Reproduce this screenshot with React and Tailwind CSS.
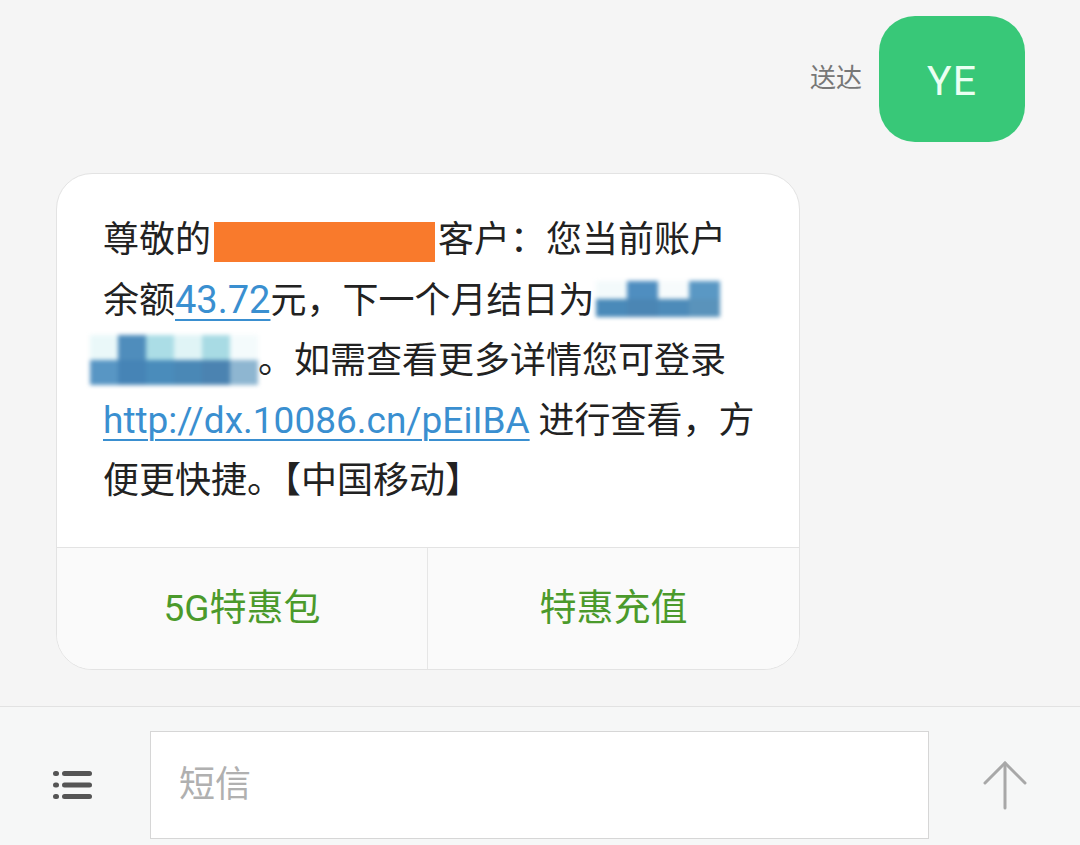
import React from 'react';

const FONT = { fontFamily: 'Roboto, "Noto Sans CJK SC", sans-serif' };

// 打码区块：像素格 + 模糊
const Mosaic = ({ top, bottom, cell, h, className }) => (
  <span className={`inline-flex flex-col align-middle blur-[2px] ${className || ''}`}>
    <span className="flex">
      {top.map((c, i) => (
        <span key={i} style={{ width: cell, height: h / 2, background: c }} />
      ))}
    </span>
    <span className="flex">
      {bottom.map((c, i) => (
        <span key={i} style={{ width: cell, height: h / 2, background: c }} />
      ))}
    </span>
  </span>
);

const MenuIcon = () => (
  <svg width="40" height="30" viewBox="0 0 40 30" fill="#555">
    <rect x="0" y="1" width="6" height="5" rx="2.5" />
    <rect x="9" y="1" width="30" height="5" rx="2.5" />
    <rect x="0" y="12.5" width="6" height="5" rx="2.5" />
    <rect x="9" y="12.5" width="30" height="5" rx="2.5" />
    <rect x="0" y="24" width="6" height="5" rx="2.5" />
    <rect x="9" y="24" width="30" height="5" rx="2.5" />
  </svg>
);

const UpArrow = () => (
  <svg width="46" height="50" viewBox="0 0 46 50" fill="none" stroke="#a8a8a8" strokeWidth="3" strokeLinecap="round">
    <line x1="23" y1="3" x2="23" y2="48" />
    <polyline points="3,23 23,3 43,23" />
  </svg>
);

export default function App() {
  return (
    <div className="min-h-[845px] h-[845px] flex flex-col bg-[#f5f5f5] overflow-hidden" style={FONT}>
      {/* 聊天区 */}
      <div className="flex-1 flex flex-col pt-4">
        <div className="flex justify-end items-center pr-[55px] gap-[17px]">
          <span className="text-[26px] text-[#777] mt-[-2px]">送达</span>
          <div className="w-[146px] h-[126px] rounded-[36px] bg-[#38c878] flex items-center justify-center">
            <span className="text-[41px] text-[#eafff2] tracking-wide mt-[6px]">YE</span>
          </div>
        </div>

        <div className="ml-[56px] mt-[31px] w-[744px] rounded-[36px] bg-white border border-[#e3e3e3] overflow-hidden">
          <div className="px-[46px] pt-[36px] pb-[36px] text-[36px] leading-[60px] text-[#222]">
            <div className="whitespace-nowrap">
              尊敬的<span className="inline-block align-middle w-[221px] h-[40px] bg-[#f97a2c] ml-[3px] mr-[3px] -mt-[1px]" />客户：您当前账户
            </div>
            <div className="whitespace-nowrap">
              余额<span className="text-[38px] text-[#3a8fd0] underline underline-offset-[6px] decoration-2">43.72</span>元，下一个月结日为
              <Mosaic
                className="-mt-[8px] ml-[2px]"
                cell={31}
                h={36}
                top={['#f3fafb', '#4f8ec0', '#f7fbfc', '#5a98c4']}
                bottom={['#4a8ab9', '#4b86b4', '#4d8bb9', '#5a93bb']}
              />
            </div>
            <div className="whitespace-nowrap">
              <Mosaic
                className="-ml-[13px] -mt-[6px]"
                cell={28}
                h={50}
                top={['#eaf8f9', '#4f8dbc', '#abdde6', '#e0f4f6', '#a8dbe4', '#f4fbfc']}
                bottom={['#5896c4', '#4684b6', '#4a8cbb', '#4a88b6', '#4b83b1', '#8eb6d1']}
              />
              。如需查看更多详情您可登录
            </div>
            <div className="whitespace-nowrap">
              <span className="text-[37px] text-[#3a8fd0] underline underline-offset-[6px] decoration-2">http://dx.10086.cn/pEiIBA</span> 进行查看，方
            </div>
            <div className="whitespace-nowrap">便更快捷。【中国移动】</div>
          </div>
          <div className="grid grid-cols-2 border-t border-[#e3e3e3] bg-[#fafafa] h-[122px]">
            <div className="flex items-center justify-center border-r border-[#e6e6e6] text-[37px] text-[#4b9a2b]">
              5G特惠包
            </div>
            <div className="flex items-center justify-center text-[37px] text-[#4b9a2b]">特惠充值</div>
          </div>
        </div>
      </div>

      {/* 输入栏 */}
      <div className="h-[139px] border-t border-[#e2e2e2] bg-[#f6f7f7] flex items-start pt-[24px]">
        <div className="w-[150px] h-[108px] flex items-center justify-center pr-[4px]">
          <MenuIcon />
        </div>
        <div className="w-[779px] h-[108px] bg-white border border-[#d6d6d6] flex items-center px-[28px]">
          <span className="text-[36px] text-[#b0b0b0]">短信</span>
        </div>
        <div className="flex-1 h-[108px] flex items-center justify-center">
          <UpArrow />
        </div>
      </div>
    </div>
  );
}
